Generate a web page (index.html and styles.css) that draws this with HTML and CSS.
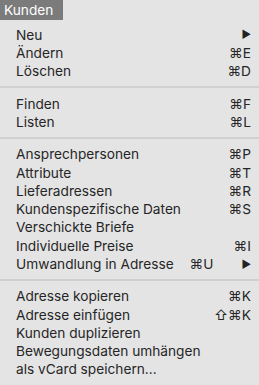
FILE: index.html
```html
<!DOCTYPE html>
<html lang="de">
<head>
    <meta charset="UTF-8">
    <title>Kunden</title>
    <link rel="stylesheet" href="styles.css">
</head>
<body>
    <div class="menu-title">Kunden</div>
    <div class="menu">
        <div class="item"><span>Neu</span><span class="arrow">&#9654;</span></div>
        <div class="item"><span>Ändern</span><span class="key">⌘E</span></div>
        <div class="item"><span>Löschen</span><span class="key">⌘D</span></div>
        <div class="sep"></div>
        <div class="item"><span>Finden</span><span class="key">⌘F</span></div>
        <div class="item"><span>Listen</span><span class="key">⌘L</span></div>
        <div class="sep"></div>
        <div class="item"><span>Ansprechpersonen</span><span class="key">⌘P</span></div>
        <div class="item"><span>Attribute</span><span class="key">⌘T</span></div>
        <div class="item"><span>Lieferadressen</span><span class="key">⌘R</span></div>
        <div class="item"><span>Kundenspezifische Daten</span><span class="key">⌘S</span></div>
        <div class="item"><span>Verschickte Briefe</span></div>
        <div class="item"><span>Individuelle Preise</span><span class="key">⌘I</span></div>
        <div class="item"><span>Umwandlung in Adresse</span><span class="key sub">⌘U</span><span class="arrow">&#9654;</span></div>
        <div class="sep"></div>
        <div class="item"><span>Adresse kopieren</span><span class="key">⌘K</span></div>
        <div class="item"><span>Adresse einfügen</span><span class="key">⇧⌘K</span></div>
        <div class="item"><span>Kunden duplizieren</span></div>
        <div class="item"><span>Bewegungsdaten umhängen</span></div>
        <div class="item"><span>als vCard speichern...</span></div>
    </div>
</body>
</html>
```
FILE: styles.css
```css
body {
    margin: 0;
    padding: 0;
    background: #e4e4e4;
    font-family: Inter, "Liberation Sans", Arial, sans-serif;
    font-size: 13.7px;
    color: #262626;
}
.menu-title {
    display: inline-block;
    background: #7b7b7b;
    color: white;
    padding: 0 10px 0 4px;
    height: 20px;
    line-height: 20px;
}
.menu {
    padding: 5.6px 8px 0 16px;
}
.item {
    display: flex;
    align-items: center;
    height: 18.3px;
}
.item span:first-child {
    flex: 1;
}
.key {
    text-align: right;
}
.key.sub {
    margin-right: 28px;
}
.arrow {
    font-size: 10.5px;
    color: #222;
}
.sep {
    height: 2px;
    background: #d0d0d0;
    margin: 6px -8px 6px -16px;
}
```
